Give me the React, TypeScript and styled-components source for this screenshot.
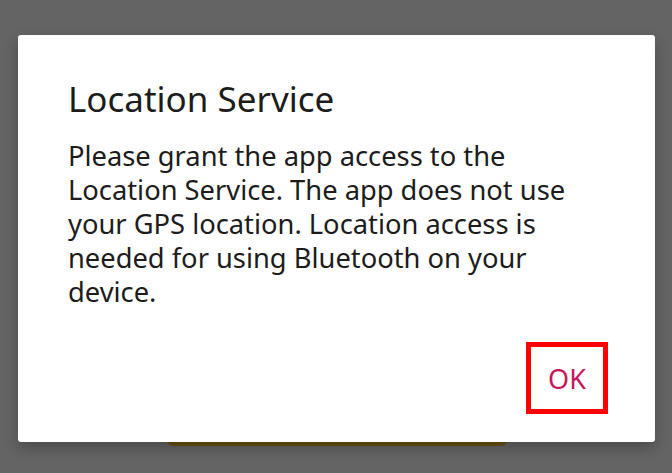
import React from "react";
import styled, { createGlobalStyle } from "styled-components";

const GlobalStyle = createGlobalStyle`
  html, body {
    margin: 0;
    padding: 0;
    background: #646464;
  }
  body {
    font-family: "Noto Sans", Roboto, sans-serif;
  }
`;

const Screen = styled.div`
  position: relative;
  width: 672px;
  height: 473px;
  overflow: hidden;
  background: #646464;
  display: flex;
  flex-direction: column;
  justify-content: flex-end;
  align-items: flex-start;
`;

const UnderlyingButton = styled.button`
  margin: 0 0 27px 167px;
  width: 340px;
  height: 60px;
  border: none;
  border-radius: 6px;
  background: #6a5214;
`;

const Dialog = styled.div`
  position: absolute;
  top: 35px;
  left: 18px;
  width: 637px;
  height: 407px;
  box-sizing: border-box;
  background: #ffffff;
  border-radius: 3px;
  box-shadow: 0 6px 14px rgba(0, 0, 0, 0.25);
  display: flex;
  flex-direction: column;
  padding: 36px 47px 28px 50px;
`;

const Title = styled.h2`
  margin: 0;
  font-size: 35px;
  font-weight: 400;
  line-height: 56px;
  color: #1c1c1c;
`;

const Message = styled.p`
  margin: 12px 0 0;
  font-size: 27.3px;
  line-height: 34px;
  color: #1c1c1c;
`;

const Actions = styled.div`
  margin-top: auto;
  display: flex;
  justify-content: flex-end;
`;

const OkButton = styled.button`
  width: 82px;
  height: 72px;
  box-sizing: border-box;
  border: 5px solid #ff0000;
  background: #ffffff;
  font-family: "Noto Sans", Roboto, sans-serif;
  font-size: 27px;
  color: #c4175b;
  padding: 0;
`;

export default function App() {
  return (
    <>
      <GlobalStyle />
      <Screen>
        <UnderlyingButton />
        <Dialog>
          <Title>Location Service</Title>
          <Message>
            Please grant the app access to the Location Service. The app does
            not use your GPS location. Location access is needed for using
            Bluetooth on your device.
          </Message>
          <Actions>
            <OkButton>OK</OkButton>
          </Actions>
        </Dialog>
      </Screen>
    </>
  );
}
